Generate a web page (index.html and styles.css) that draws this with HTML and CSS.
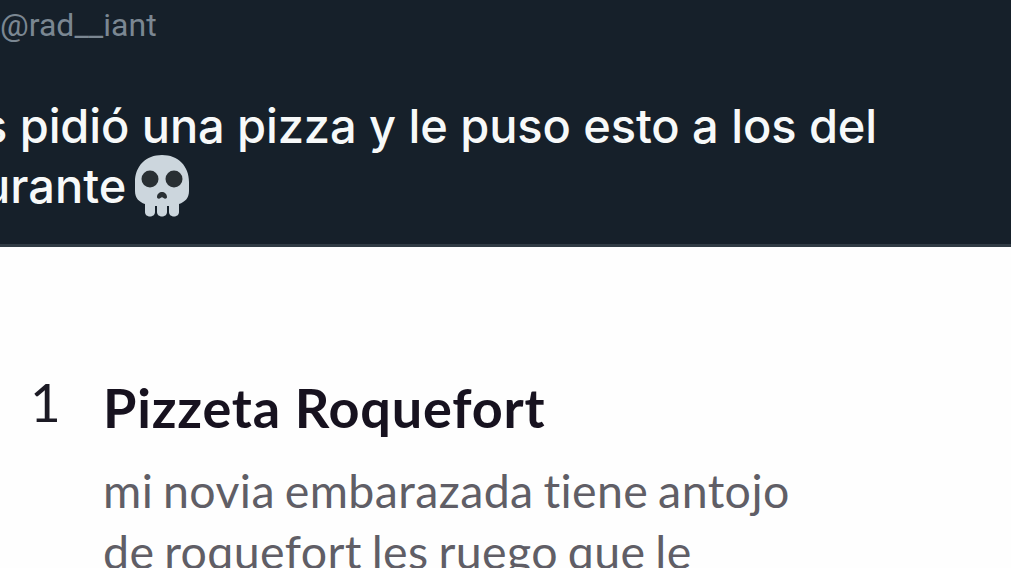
FILE: index.html
```html
<!DOCTYPE html>
<html lang="es">
<head>
    <meta charset="UTF-8">
    <meta name="viewport" content="width=device-width, initial-scale=1.0">
    <title>Pizzeta Roquefort</title>
    <link rel="stylesheet" href="styles.css">
</head>
<body>
    <div class="tweet">
        <div class="handle">@rad__iant</div>
        <div class="tweet-text">
            <p class="line first">s pidió una pizza y le puso esto a los del</p>
            <p class="line second">urante<svg class="skull" viewBox="0 0 54 62">
                <path fill="#ccd6dd" d="M27 0C11 0 0 11 0 27v9c0 7 4 11 10 13v8c0 6 10 6 10 0v-6h2v6c0 6 10 6 10 0v-6h2v6c0 6 10 6 10 0v-8c6-2 10-6 10-13v-9C54 11 43 0 27 0z"/>
                <circle cx="15" cy="24" r="8.5" fill="#292f33"/>
                <circle cx="39" cy="24" r="8.5" fill="#292f33"/>
                <path fill="#292f33" d="M22 42c0-3 2.500-5 5-5s5 2 5 5c0 2-2.500 2-3.500 1-1-1-2-1-3 0-1 1-3.500 1-3.500-1z"/>
            </svg></p>
        </div>
    </div>

    <div class="order">
        <div class="quantity">1</div>
        <div class="item">
            <h1>Pizzeta Roquefort</h1>
            <p>mi novia embarazada tiene antojo</p>
            <p>de roquefort les ruego que le</p>
        </div>
    </div>
</body>
</html>
```

FILE: styles.css
```css
body {
    margin: 0;
    height: 568px;
    overflow: hidden;
    background-color: #fefefe;
}

.tweet {
    height: 247px;
    box-sizing: border-box;
    background-color: #16202a;
    border-bottom: 3px solid #303b44;
    color: #f7f9f9;
    font-family: Inter, sans-serif;
    white-space: nowrap;
    overflow: hidden;
}

.handle {
    height: 96px;
    color: #7b8792;
    font-family: Roboto, sans-serif;
    font-size: 32px;
    line-height: 51px;
}

.line {
    margin: 0;
    font-size: 47px;
    font-weight: 500;
    line-height: 60px;
}

.first {
    margin-left: -18px;
    letter-spacing: -0.15px;
    word-spacing: 0.2px;
}

.second {
    display: flex;
    margin-left: -18px;
}

.skull {
    width: 54px;
    height: 62px;
    margin: -1px 0 0 9px;
}

.order {
    display: flex;
    padding-top: 125px;
    font-family: Lato, sans-serif;
    font-variant-ligatures: none;
    white-space: nowrap;
}

.quantity {
    width: 73px;
    padding-left: 30px;
    color: #1c1a24;
    font-size: 53px;
    line-height: 60px;
}

.item h1 {
    margin: 6px 0 22px;
    color: #17121f;
    font-size: 54px;
    letter-spacing: 0.8px;
    line-height: 60px;
}

.item p {
    margin: 0;
    color: #605e66;
    font-size: 46.5px;
    letter-spacing: 0.4px;
    word-spacing: -2.5px;
    line-height: 61px;
}
```
